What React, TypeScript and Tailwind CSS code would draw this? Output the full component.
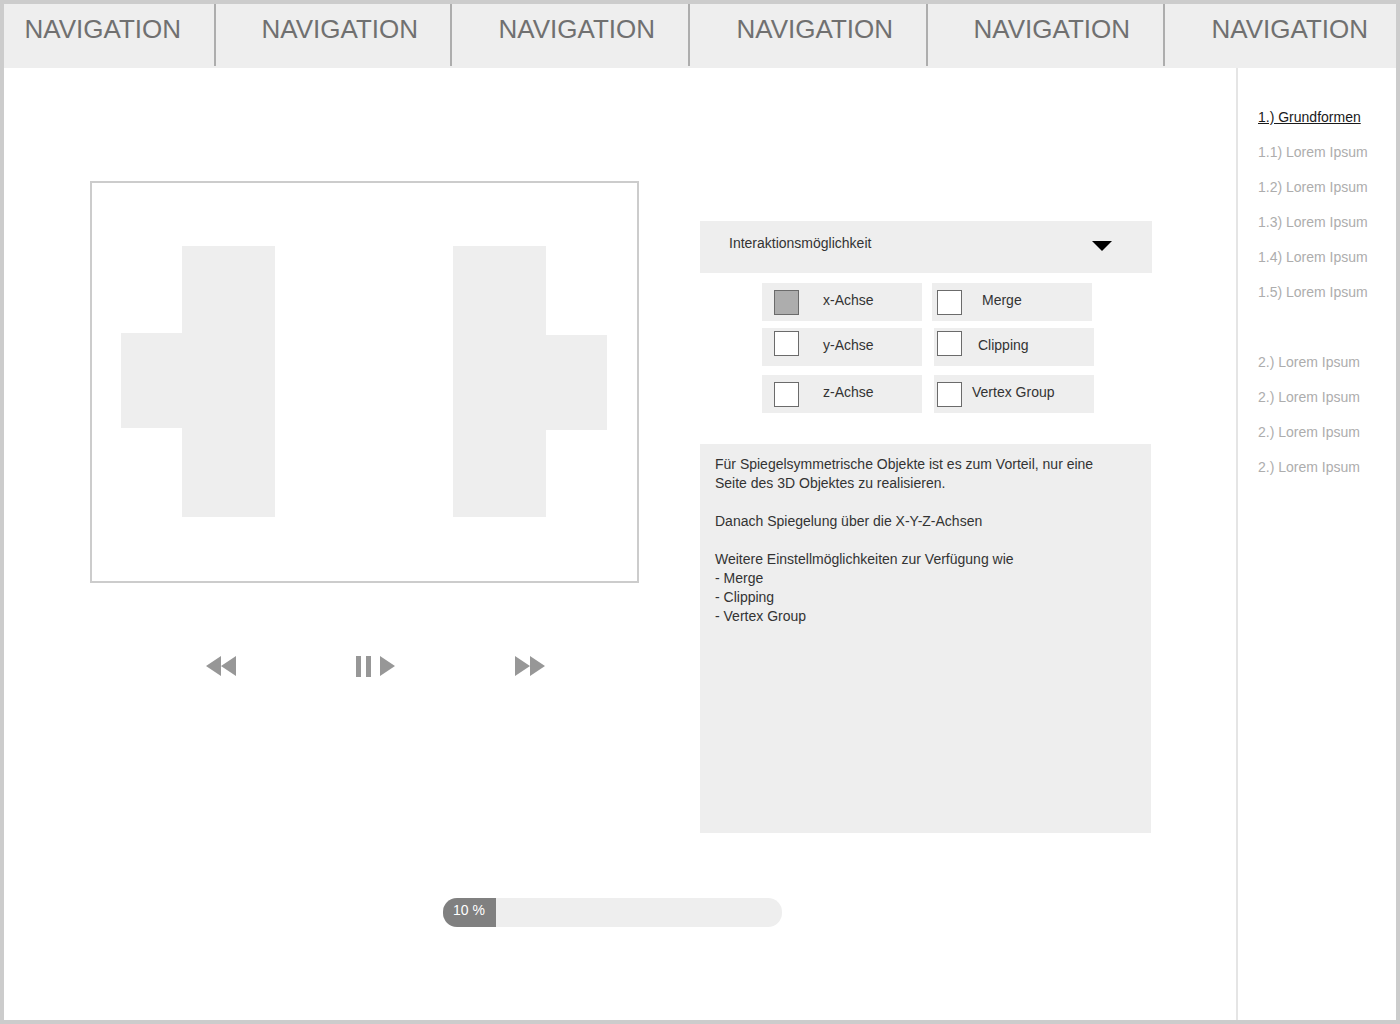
import { useState } from "react";

const navItems = [
  "pr-[33px] border-r-2",
  "pr-8 border-r-2",
  "pr-[33px] border-r-2",
  "pr-[33px] border-r-2",
  "pr-[33px] border-r-2",
  "pr-7",
];

const chapterOne = ["1.1) Lorem Ipsum", "1.2) Lorem Ipsum", "1.3) Lorem Ipsum", "1.4) Lorem Ipsum", "1.5) Lorem Ipsum"];
const chapterTwo = ["2.) Lorem Ipsum", "2.) Lorem Ipsum", "2.) Lorem Ipsum", "2.) Lorem Ipsum"];

type OptionProps = { label: string; box: string; text: string; checked?: boolean };

function Option({ label, box, text, checked = false }: OptionProps) {
  const [on, setOn] = useState(checked);
  return (
    <label className={`flex h-[38px] w-40 items-start bg-[#eeeeee] ${box}`}>
      <input
        type="checkbox"
        checked={on}
        onChange={() => setOn(!on)}
        className="size-[25px] shrink-0 appearance-none border border-[#6b6b6b] bg-white checked:bg-[#adadad]"
      />
      <span className={`whitespace-nowrap leading-5 ${text}`}>{label}</span>
    </label>
  );
}

function Header() {
  return (
    <header className="bg-[#eeeeee] pb-0.5">
      <nav className="grid grid-cols-[212fr_236fr_238fr_238fr_237fr_231fr]">
        {navItems.map((cell, i) => (
          <div key={i} className={`flex h-[62px] justify-end border-[#adadad] pt-[9px] ${cell}`}>
            <a href="#" className="text-[26px] leading-8 text-[#707070]">
              NAVIGATION
            </a>
          </div>
        ))}
      </nav>
    </header>
  );
}

function Preview() {
  return (
    <section>
      <div className="border-2 border-[#cccccc]">
        <svg viewBox="0 0 545 398" className="block w-full" fill="#eeeeee" role="img" aria-label="Spiegelung">
          <path d="M90 63h93v271H90v-89H29v-95h61z" />
          <path d="M361 63h93v89h61v95h-61v87h-93z" />
        </svg>
      </div>
      <div className="mt-[73px] flex justify-center gap-[120px] pl-[22px]">
        <button type="button" aria-label="Zurück">
          <svg width="30" height="21" fill="#979797">
            <path d="M15 0v20L0 10zM30 0v20L15 10z" />
          </svg>
        </button>
        <button type="button" aria-label="Pause / Abspielen">
          <svg width="39" height="21" fill="#979797">
            <path d="M0 0h5v21H0zM10 0h5v21h-5zM24 0v20l15-10z" />
          </svg>
        </button>
        <button type="button" aria-label="Vor">
          <svg width="30" height="21" fill="#979797">
            <path d="M0 0v20l15-10zM15 0v20l15-10z" />
          </svg>
        </button>
      </div>
    </section>
  );
}

function Settings() {
  return (
    <section className="pt-10">
      <div className="relative">
        <select
          aria-label="Interaktionsmöglichkeit"
          className="block h-[52px] w-full appearance-none bg-[#eeeeee] pb-2 pl-[29px]"
        >
          <option>Interaktionsmöglichkeit</option>
        </select>
        <svg width="20" height="10" className="pointer-events-none absolute top-5 right-10">
          <path d="M0 0h20L10 10z" />
        </svg>
      </div>
      <div className="flex flex-col pt-2.5 pr-[58px] pl-[62px]">
        <div className="flex gap-2.5">
          <Option label="x-Achse" box="pl-3 pt-[7px]" text="ml-6" checked />
          <Option label="Merge" box="pl-[5px] pt-[7px]" text="ml-5" />
        </div>
        <div className="mt-[7px] flex gap-3">
          <Option label="y-Achse" box="pl-3 pt-[3px]" text="ml-6 mt-1" />
          <Option label="Clipping" box="pl-[3px] pt-[3px]" text="ml-4 mt-1" />
        </div>
        <div className="mt-[9px] flex gap-3">
          <Option label="z-Achse" box="pl-3 pt-[7px]" text="ml-6" />
          <Option label="Vertex Group" box="pl-[3px] pt-[7px]" text="ml-2.5" />
        </div>
      </div>
      <div className="mt-[31px] mr-px min-h-[389px] bg-[#eeeeee] pt-[11px] pr-10 pb-4 pl-[15px] leading-[19px]">
        <p>Für Spiegelsymmetrische Objekte ist es zum Vorteil, nur eine Seite des 3D Objektes zu realisieren.</p>
        <p className="mt-[19px]">Danach Spiegelung über die X-Y-Z-Achsen</p>
        <p className="mt-[19px]">Weitere Einstellmöglichkeiten zur Verfügung wie</p>
        <ul>
          <li>- Merge</li>
          <li>- Clipping</li>
          <li>- Vertex Group</li>
        </ul>
      </div>
    </section>
  );
}

export default function App() {
  return (
    <div className="flex min-h-screen flex-col border-4 border-[#cccccc] bg-white font-['Liberation_Sans',Arial,sans-serif] text-sm text-[#333333]">
      <Header />
      <div className="flex grow">
        <main className="min-w-0 grow pt-[113px] pr-[84px] pl-[86px]">
          <div className="grid grid-cols-[549fr_452fr] gap-[61px]">
            <Preview />
            <Settings />
          </div>
          <div className="mt-[65px] flex justify-center pr-[17px]">
            <div
              role="progressbar"
              aria-label="Fortschritt"
              aria-valuenow={10}
              className="h-[29px] w-[339px] overflow-hidden rounded-[14px] bg-[#eeeeee]"
            >
              <div className="h-full w-[53px] bg-[#808080] pt-0.5 pl-2.5 leading-5 text-white">10 %</div>
            </div>
          </div>
        </main>
        <aside className="w-40 shrink-0 border-l-2 border-[#e5e5e5] pt-[39px] pl-5 leading-5 text-[#adadad]">
          <a href="#" className="text-[#1a1a1a] underline">
            1.) Grundformen
          </a>
          <ul className="mt-[15px] flex flex-col gap-[15px]">
            {chapterOne.map((item) => (
              <li key={item}>
                <a href="#">{item}</a>
              </li>
            ))}
          </ul>
          <ul className="mt-[50px] flex flex-col gap-[15px]">
            {chapterTwo.map((item, i) => (
              <li key={i}>
                <a href="#">{item}</a>
              </li>
            ))}
          </ul>
        </aside>
      </div>
    </div>
  );
}
